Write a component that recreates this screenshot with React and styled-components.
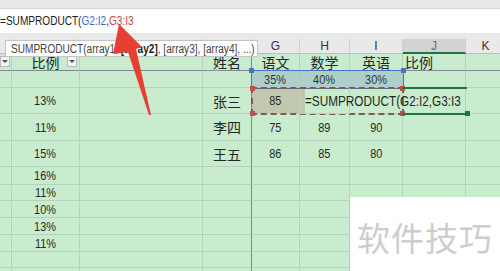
import React from 'react';
import styled, { createGlobalStyle } from 'styled-components';

const GlobalStyle = createGlobalStyle`
  html, body {
    margin: 0;
    padding: 0;
    width: 500px;
    height: 271px;
    overflow: hidden;
    background: #ffffff;
  }
  body {
    font-family: "Liberation Sans", "Noto Sans CJK SC", sans-serif;
  }
`;

const COLS = [12, 68, 123, 49, 48, 50, 53, 63, 40];

const ROWS = [
  { h: 17, freeze: true, cells: ['', '比例', '', '姓名', '语文', '数学', '英语', '比例', ''], dd: true },
  { h: 17, cells: ['', '', '', '', '35%', '40%', '30%', '', ''], blue: true },
  { h: 26, cells: ['', '13%', '', '张三', '85', '', '', '', ''], formula: true },
  { h: 27, cells: ['', '11%', '', '李四', '75', '89', '90', '', ''] },
  { h: 26, cells: ['', '15%', '', '王五', '86', '85', '80', '', ''] },
  { h: 18, cells: ['', '16%', '', '', '', '', '', '', ''] },
  { h: 16, cells: ['', '11%', '', '', '', '', '', '', ''] },
  { h: 17, cells: ['', '10%', '', '', '', '', '', '', ''] },
  { h: 17, cells: ['', '13%', '', '', '', '', '', '', ''] },
  { h: 17, cells: ['', '11%', '', '', '', '', '', '', ''] },
  { h: 16, cells: ['', '', '', '', '', '', '', '', ''] },
  { h: 16, cells: ['', '', '', '', '', '', '', '', ''] },
];

const LETTERS = ['', '', '', '', 'G', 'H', 'I', 'J', 'K'];

const Page = styled.div`
  position: relative;
  width: 500px;
  height: 271px;
  display: flex;
  flex-direction: column;
  overflow: hidden;
  background: #c9ebce;
  & > * {
    flex-shrink: 0;
  }
`;

const TopStrip = styled.div`
  height: 8px;
  background: #e9e9e9;
  border-bottom: 1px solid #d6d6d6;
`;

const FormulaBar = styled.div`
  height: 24px;
  background: #ffffff;
  display: flex;
  align-items: center;
  font-size: 12px;
  color: #222;
  white-space: nowrap;
`;

/* the screenshot uses a narrow UI face; squeeze Liberation Sans to its width */
const Narrow = styled.span`
  display: inline-block;
  transform: scaleX(${(p) => p.$scale || 0.84});
  transform-origin: ${(p) => (p.$origin === 'left' ? 'left center' : 'center')};
`;

const Ref = styled.span`
  color: ${(p) => p.$color};
`;

const GapStrip = styled.div`
  height: 6px;
  background: #e9e9e9;
`;

const Sheet = styled.div`
  position: relative;
  display: grid;
  grid-template-columns: ${COLS.map((c) => `${c}px`).join(' ')};
  grid-template-rows: 15px ${ROWS.map((r) => `${r.h}px`).join(' ')};
`;

const ColHead = styled.div`
  grid-row: 1;
  box-sizing: border-box;
  display: flex;
  align-items: center;
  justify-content: center;
  font-size: 12px;
  color: ${(p) => (p.$active ? '#6a6a6a' : '#333')};
  background: ${(p) => (p.$active ? '#d3d3d3' : '#e9e9e9')};
  border-right: 1px solid #d0d0d0;
  border-bottom: ${(p) => (p.$active ? '2px solid #217346' : '1px solid #bdbdbd')};
`;

const Cell = styled.div`
  grid-row: ${(p) => p.$r};
  grid-column: ${(p) => p.$c};
  position: relative;
  box-sizing: border-box;
  display: flex;
  align-items: center;
  justify-content: ${(p) => (p.$left ? 'flex-start' : 'center')};
  padding-left: ${(p) => (p.$left ? '2px' : '0')};
  font-size: ${(p) => (p.$cjk ? '14px' : '13px')};
  color: #1f2a22;
  white-space: nowrap;
  background: ${(p) => (p.$fill ? '#c2c8b0' : p.$tint ? '#b6d7cb' : 'transparent')};
  box-shadow: ${(p) => (p.$fill ? '5px 0 0 #c2c8b0' : 'none')};
  z-index: ${(p) => (p.$over ? 4 : p.$fill ? 1 : 0)};
  border-right: 1px solid ${(p) => (p.$freezeCol ? '#7d8c82' : '#b4d3ba')};
  border-bottom: 1px solid ${(p) => (p.$freezeRow ? '#7d8c90' : '#b4d3ba')};
`;

const FormulaText = styled.span`
  position: absolute;
  left: 5px;
  top: 50%;
  transform: translateY(-50%);
  font-size: 14px;
  color: #1f2a22;
`;

const DropBtn = styled.span`
  position: absolute;
  right: ${(p) => p.$right}px;
  top: 2px;
  width: 10px;
  height: 11px;
  box-sizing: border-box;
  background: #f3f3f3;
  border: 1px solid #b9b9b9;
  display: flex;
  align-items: center;
  justify-content: center;
  &::after {
    content: '';
    border-left: 3px solid transparent;
    border-right: 3px solid transparent;
    border-top: 3px solid #555;
  }
`;

/* selection outlines drawn over the grid, spanning cells by grid lines */
const Range = styled.div`
  grid-column: ${(p) => p.$cols};
  grid-row: ${(p) => p.$rows};
  position: relative;
  box-sizing: border-box;
  margin: -1px;
  pointer-events: none;
  z-index: 3;
  ${(p) =>
    p.$kind === 'blue' &&
    `border: 1px solid #4a72c2; background: rgba(120, 150, 190, 0.12);`}
  ${(p) => p.$kind === 'dash' && `border: 2px dashed #86584c;`}
  ${(p) =>
    p.$kind === 'active' &&
    `border-top: 2px solid #217346; border-bottom: 2px solid #217346;`}
`;

const Corner = styled.span`
  position: absolute;
  width: 5px;
  height: 5px;
  background: ${(p) => p.$color};
  z-index: 5;
  ${(p) => (p.$v === 'top' ? 'top: -3px;' : 'bottom: -3px;')}
  ${(p) => (p.$h === 'left' ? 'left: -3px;' : 'right: -3px;')}
`;

const Tooltip = styled.div`
  position: absolute;
  left: 5px;
  top: 40px;
  width: 253px;
  height: 17px;
  box-sizing: border-box;
  background: #ffffff;
  border: 1px solid #c4c4c4;
  padding-left: 5px;
  display: flex;
  align-items: center;
  font-size: 12px;
  color: #444;
  white-space: nowrap;
  z-index: 5;
  b {
    color: #222;
  }
`;

const Arrow = styled.svg`
  position: absolute;
  left: 0;
  top: 0;
  z-index: 6;
  pointer-events: none;
`;

const Watermark = styled.div`
  position: absolute;
  right: 0;
  bottom: 0;
  width: 150px;
  height: 74px;
  background: #ffffff;
  display: flex;
  align-items: center;
  justify-content: center;
  padding-top: 6px;
  box-sizing: border-box;
  font-family: "Noto Sans CJK SC", sans-serif;
  font-size: 33px;
  letter-spacing: 1px;
  color: #cdcdcd;
  z-index: 7;
`;

const isCjk = (t) => /[\u4e00-\u9fff]/.test(t);

export default function App() {
  return (
    <>
      <GlobalStyle />
      <Page>
        <TopStrip />
        <FormulaBar>
          <Narrow $origin="left">
            =SUMPRODUCT(<Ref $color="#3a6cc4">G2:I2</Ref>,<Ref $color="#c4493f">G3:I3</Ref>
          </Narrow>
        </FormulaBar>
        <GapStrip />
        <Sheet>
          {LETTERS.map((l, i) => (
            <ColHead key={`h${i}`} $active={l === 'J'}>{l}</ColHead>
          ))}
          {ROWS.map((row, ri) =>
            row.cells.map((text, ci) => {
              const editing = row.formula && ci === 5;
              return (
                <Cell
                  key={`${ri}-${ci}`}
                  $r={ri + 2}
                  $c={ci + 1}
                  $freezeRow={row.freeze}
                  $freezeCol={ci === 3}
                  $cjk={isCjk(text)}
                  $left={ri === 0 && ci === 7}
                  $fill={row.formula && ci === 4}
                  $tint={row.blue && ci >= 4 && ci <= 6}
                  $over={editing}
                >
                  {text && (isCjk(text) ? text : <Narrow>{text}</Narrow>)}
                  {row.dd && ci === 0 && <DropBtn $right={1} />}
                  {row.dd && ci === 1 && <DropBtn $right={2} />}
                  {editing && (
                    <FormulaText>
                      <Narrow $origin="left">=SUMPRODUCT(G2:I2,G3:I3</Narrow>
                    </FormulaText>
                  )}
                </Cell>
              );
            })
          )}
          <Range $kind="blue" $cols="5 / 8" $rows="3 / 4">
            <Corner $v="top" $h="left" $color="#4a72c2" />
            <Corner $v="top" $h="right" $color="#4a72c2" />
          </Range>
          <Range $kind="dash" $cols="5 / 8" $rows="4 / 5">
            <Corner $v="top" $h="left" $color="#c0504d" />
            <Corner $v="top" $h="right" $color="#c0504d" />
            <Corner $v="bottom" $h="left" $color="#c0504d" />
            <Corner $v="bottom" $h="right" $color="#c0504d" />
          </Range>
          <Range $kind="active" $cols="8 / 9" $rows="4 / 5">
            <Corner $v="bottom" $h="right" $color="#217346" />
          </Range>
        </Sheet>
        <Tooltip>
          <Narrow $origin="left">
            SUMPRODUCT(array1,&nbsp;<b>[array2]</b>, [array3], [array4], ...)
          </Narrow>
        </Tooltip>
        <Arrow width="500" height="271" viewBox="0 0 500 271">
          <polygon
            points="119,24 142,47 136,49 151,115 149,115 128,52 113,54"
            fill="#e83f33"
          />
        </Arrow>
        <Watermark>软件技巧</Watermark>
      </Page>
    </>
  );
}
